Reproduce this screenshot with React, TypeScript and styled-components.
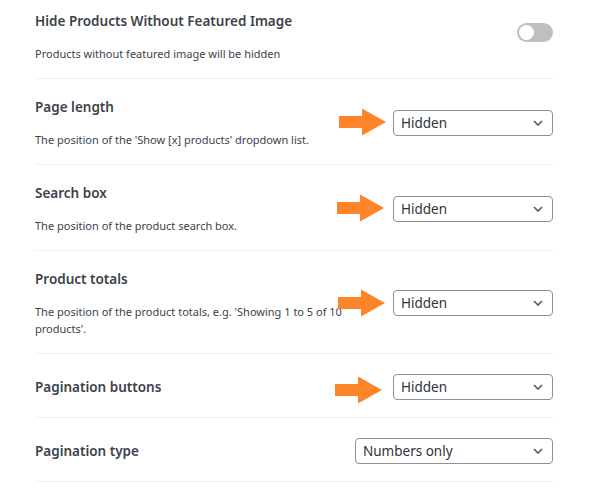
import React from "react";
import styled, { createGlobalStyle } from "styled-components";

const GlobalStyle = createGlobalStyle`
  body {
    margin: 0;
    background: #fff;
    font-family: "Noto Sans", "Open Sans", sans-serif;
    color: #3c434a;
  }
`;

interface Setting {
  title: string;
  desc?: string;
  control: "toggle" | "select";
  value?: string;
  wide?: boolean;
  arrow?: { dx: number; dy: number };
}

const settings: Setting[] = [
  {
    title: "Hide Products Without Featured Image",
    desc: "Products without featured image will be hidden",
    control: "toggle",
  },
  {
    title: "Page length",
    desc: "The position of the 'Show [x] products' dropdown list.",
    control: "select",
    value: "Hidden",
    arrow: { dx: 7, dy: -1 },
  },
  {
    title: "Search box",
    desc: "The position of the product search box.",
    control: "select",
    value: "Hidden",
    arrow: { dx: 9, dy: -1 },
  },
  {
    title: "Product totals",
    desc: "The position of the product totals, e.g. 'Showing 1 to 5 of 10 products'.",
    control: "select",
    value: "Hidden",
    arrow: { dx: 8, dy: 0 },
  },
  {
    title: "Pagination buttons",
    control: "select",
    value: "Hidden",
    arrow: { dx: 11, dy: 3 },
  },
  {
    title: "Pagination type",
    control: "select",
    value: "Numbers only",
    wide: true,
  },
];

const App: React.FC = () => {
  return (
    <>
      <GlobalStyle />
      <Panel>
        {settings.map((s, i) => (
          <Row key={s.title} first={i === 0}>
            <Info>
              <Title>{s.title}</Title>
              {s.desc && <Desc>{s.desc}</Desc>}
            </Info>
            <Control>
              {s.control === "toggle" ? (
                <Toggle>
                  <Knob />
                </Toggle>
              ) : (
                <Select wide={s.wide}>
                  <span>{s.value}</span>
                  <Chevron />
                </Select>
              )}
              {s.arrow && <Arrow dx={s.arrow.dx} dy={s.arrow.dy} />}
            </Control>
          </Row>
        ))}
      </Panel>
    </>
  );
};

export default App;

const Chevron: React.FC = () => (
  <svg width="10" height="6" viewBox="0 0 10 6" fill="none">
    <path d="M1 1l4 4 4-4" stroke="#50575e" strokeWidth="1.6" />
  </svg>
);

const Arrow: React.FC<{ dx: number; dy: number }> = ({ dx, dy }) => (
  <ArrowBox dx={dx} dy={dy}>
    <svg width="47" height="27" viewBox="0 0 47 27">
      <rect x="0" y="7.5" width="24" height="12" fill="#fd8428" />
      <polygon points="23,0 47,13.5 23,27" fill="#fd8428" />
    </svg>
  </ArrowBox>
);

const Panel = styled.div`
  width: 518px;
  margin-left: 35px;
`;

const Row = styled.div.withConfig({
  shouldForwardProp: (p) => p !== "first",
})<{ first?: boolean }>`
  display: flex;
  align-items: center;
  justify-content: space-between;
  box-sizing: border-box;
  min-height: 64px;
  padding: ${(p) => (p.first ? "11px" : "18px")} 0 16px;
  border-bottom: 1px solid #f0f0f1;
`;

const Info = styled.div`
  display: flex;
  flex-direction: column;
  gap: 14px;
  max-width: 314px;
`;

const Title = styled.div`
  font-size: 13.5px;
  font-weight: 600;
  line-height: 20px;
  color: #3c434a;
`;

const Desc = styled.div`
  font-size: 11px;
  line-height: 17px;
  color: #3c434a;
`;

const Control = styled.div`
  position: relative;
  display: flex;
  align-items: center;
`;

const Select = styled.div.withConfig({
  shouldForwardProp: (p) => p !== "wide",
})<{ wide?: boolean }>`
  box-sizing: border-box;
  width: ${(p) => (p.wide ? "198px" : "160px")};
  height: 26px;
  display: flex;
  align-items: center;
  justify-content: space-between;
  padding: 0 9px 0 7px;
  border: 1px solid #8c8f94;
  border-radius: 4px;
  font-size: 13.5px;
  color: #2c3338;
`;

const Toggle = styled.div`
  box-sizing: border-box;
  width: 36px;
  height: 19px;
  margin-bottom: 8px;
  border-radius: 10px;
  background: #bfbfbf;
  display: flex;
  align-items: center;
  padding-left: 2px;
`;

const Knob = styled.div`
  width: 15px;
  height: 15px;
  border-radius: 50%;
  background: #fff;
`;

const ArrowBox = styled.div<{ dx: number; dy: number }>`
  position: absolute;
  right: calc(100% + ${(p) => p.dx}px);
  top: 50%;
  transform: translateY(calc(-50% + ${(p) => p.dy}px));
  display: flex;
`;
